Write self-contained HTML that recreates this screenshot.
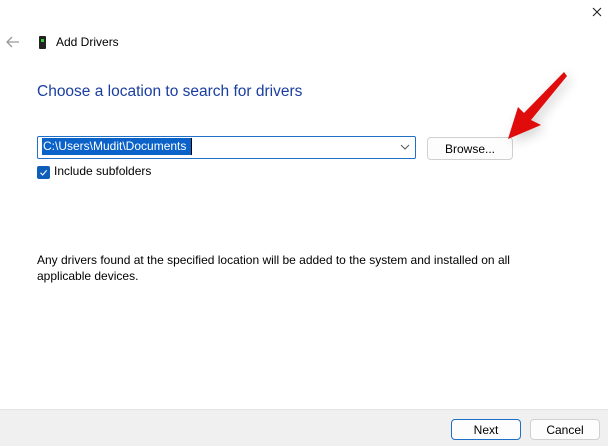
<!DOCTYPE html>
<html><head><meta charset="utf-8"><style>
*{margin:0;padding:0;box-sizing:border-box}
body{width:608px;height:446px;background:#fff;font-family:"Segoe UI","Liberation Sans",sans-serif;font-size:12px;color:#000;position:relative;overflow:hidden}
.a{position:absolute;white-space:nowrap}
.btn{position:absolute;border:1px solid #d0d0d0;border-radius:4px;background:#fdfdfd;text-align:center;font-size:12px;line-height:20px}
</style></head><body>
<svg class="a" style="left:592px;top:7px" width="10" height="10"><path d="M1 1L9 9M9 1L1 9" stroke="#222" stroke-width="1.1"/></svg>
<svg class="a" style="left:6px;top:36px" width="14" height="12"><path d="M1 6H13M6 1L1 6L6 11" stroke="#999" stroke-width="1.3" fill="none"/></svg>
<div class="a" style="left:39px;top:36px;width:7px;height:13px;background:#222;border-radius:1px"></div>
<div class="a" style="left:41px;top:39px;width:3px;height:3px;background:#3c3"></div>
<div class="a" style="left:56px;top:35px;font-size:12px">Add Drivers</div>
<div class="a" style="left:37px;top:83px;font-size:15.5px;color:#1a3ea0">Choose a location to search for drivers</div>
<div class="a" style="left:37px;top:136px;width:379px;height:23px;border:1px solid #1f6fc6;border-radius:2px"></div>
<div class="a" style="left:42px;top:138px;width:149px;height:17px;background:#0b62c9"></div>
<div class="a" style="left:191px;top:138px;width:1px;height:17px;background:#000"></div>
<div class="a" style="left:43px;top:138px;color:#fff;font-size:12px;line-height:17px">C:\Users\Mudit\Documents</div>
<svg class="a" style="left:400px;top:144px" width="10" height="6"><path d="M1 1L5 5L9 1" stroke="#555" fill="none"/></svg>
<div class="btn" style="left:427px;top:137px;width:86px;height:23px;line-height:22px">Browse...</div>
<div class="a" style="left:37px;top:166px;width:13px;height:13px;background:#0f5fba;border-radius:2px"></div>
<svg class="a" style="left:37px;top:166px" width="13" height="13"><path d="M3.5 6.8L5.7 9L9.7 4.3" stroke="#fff" stroke-width="1.1" fill="none"/></svg>
<div class="a" style="left:54px;top:164px">Include subfolders</div>
<div class="a" style="left:37px;top:252px;line-height:16px">Any drivers found at the specified location will be added to the system and installed on all<br>applicable devices.</div>
<svg class="a" style="left:0;top:0" width="608" height="446">
<defs><filter id="s" x="-50%" y="-50%" width="200%" height="200%"><feGaussianBlur stdDeviation="6"/></filter></defs>
<path d="M567 75L531 120L541 125L508 139L518 107L524 113L563 71Z" fill="#000" opacity="0.18" filter="url(#s)" transform="translate(4,4)"/>
<path d="M567 76L531 120L541 125L508 139L518 107L524 113L564 72Z" fill="#e00b0b"/>
</svg>
<div class="a" style="left:0;top:409px;width:608px;height:37px;background:#f0f0f0;border-top:1px solid #e3e3e3"></div>
<div class="btn" style="left:451px;top:419px;width:70px;height:21px;border-color:#1f6fc6">Next</div>
<div class="btn" style="left:530px;top:419px;width:70px;height:21px">Cancel</div>
</body></html>
